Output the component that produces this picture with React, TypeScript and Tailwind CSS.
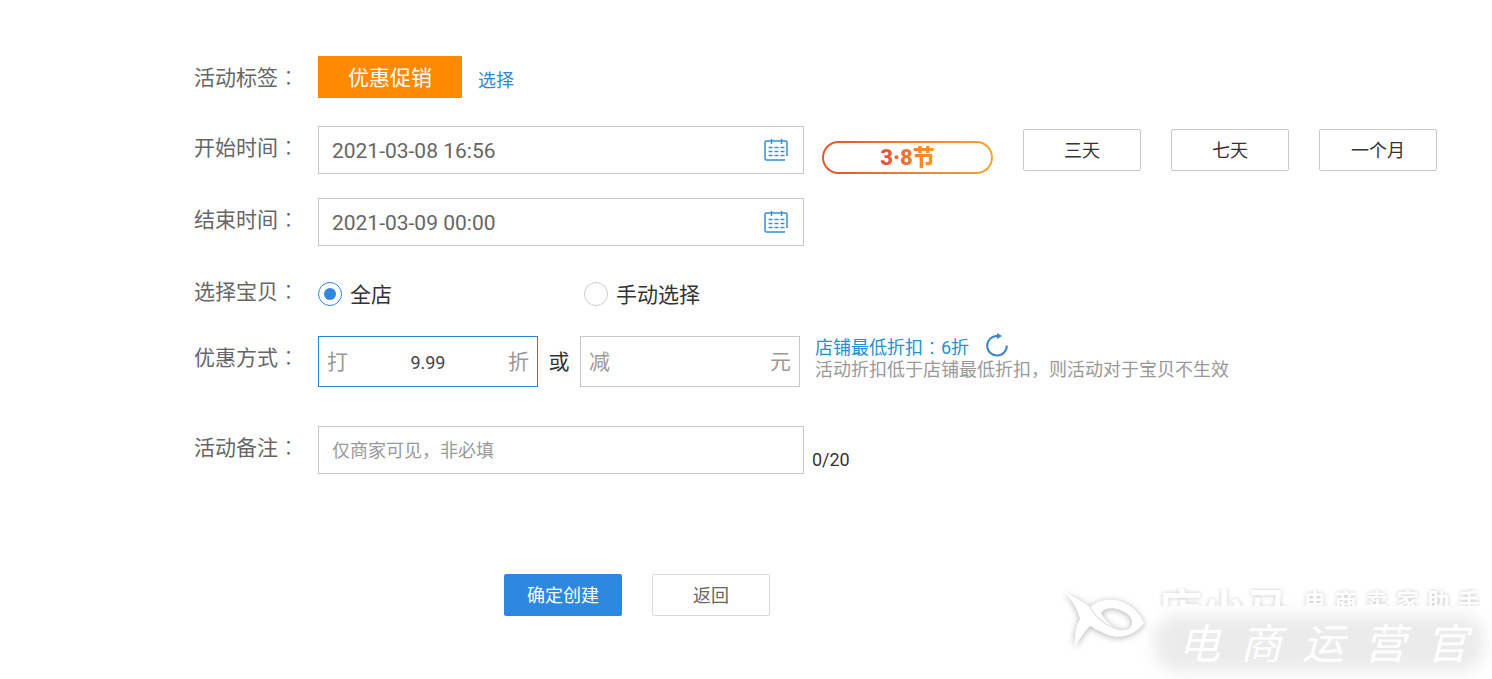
import type { ReactNode } from "react";

const ranges = ["三天", "七天", "一个月"];

function Row({ label, htmlFor, children }: { label: string; htmlFor?: string; children: ReactNode }) {
  return (
    <div className="flex items-start">
      <label htmlFor={htmlFor} className="w-[124px] shrink-0 text-[21px] leading-10 text-[#666]">
        {label}
        <span className="font-['Noto_Sans_CJK_TC',sans-serif] font-light">：</span>
      </label>
      {children}
    </div>
  );
}

function CalendarIcon() {
  return (
    <svg viewBox="0 0 24 24" className="h-6 w-6 shrink-0" fill="none" stroke="#3a8fcf" strokeWidth="1.5">
      <path d="M23 18V4.500a1.500 1.500 0 0 0-1.500-1.500h-19A1.500 1.500 0 0 0 1 4.500v16A1.500 1.500 0 0 0 2.500 22H21" />
      <path d="M7.500 1v5M17.500 1v5" />
      <path d="M4.500 9.500h4m2 0h4m2 0h4M4.500 13.500h4m2 0h4m2 0h4M4.500 17.500h4m2 0h4m2 0h4" />
    </svg>
  );
}

function DateField({ id, value }: { id: string; value: string }) {
  return (
    <div className="flex h-12 w-[486px] items-center border border-[#c8c8c8] pr-[15px] pl-[13px]">
      <input id={id} defaultValue={value} className="min-w-0 flex-1 pt-1 text-[21px] text-[#666] outline-none" />
      <CalendarIcon />
    </div>
  );
}

function Radio({ label, checked, className }: { label: string; checked?: boolean; className?: string }) {
  return (
    <label className={`flex items-center gap-2 text-[21px] text-[#333] ${className ?? ""}`}>
      <input
        type="radio"
        name="scope"
        defaultChecked={checked}
        className="grid h-6 w-6 appearance-none place-content-center rounded-full border border-[#ccc] before:h-3 before:w-3 before:rounded-full checked:border-[#2f88df] checked:before:bg-[#2f88df]"
      />
      <span className="pt-1">{label}</span>
    </label>
  );
}

function Watermark() {
  return (
    <div className="pointer-events-none absolute right-0 bottom-0 h-[95px] w-[432px] overflow-hidden select-none">
      <div className="absolute right-2 bottom-2 h-14 w-[330px] rounded-3xl bg-[#ebebeb] blur-[8px]" />
      <svg viewBox="0 0 90 66" className="absolute top-1 left-0 h-[66px] w-[90px] drop-shadow-[0_1px_3px_rgba(0,0,0,0.3)]">
        <path
          fillRule="evenodd"
          fill="#fff"
          d="M5 5C16 10 24 14 30 19C38 12 50 10 60 13C72 17 80 26 84 35C76 46 62 52 48 47C40 44 34 40 30 38C24 44 19 52 15 59C14 48 16 38 20 31C17 20 12 12 5 5ZM41 25C44 20 52 19 60 22C68 25 73 30 72 36C71 40 67 43 62 42C52 40 45 33 41 25Z"
        />
        <path d="M30 19C36 30 48 40 62 42" fill="none" stroke="#e4e4e4" strokeWidth="1.5" />
      </svg>
      <div className="absolute top-1 left-[98px] flex h-[18px] items-start overflow-hidden font-bold text-white [text-shadow:0_0_4px_rgba(0,0,0,0.22)]">
        <span className="w-[146px] text-[44px] leading-[46px]">店小马</span>
        <span className="flex w-[176px] justify-between text-[22px] leading-7">
          {["电", "商", "卖", "家", "助", "手"].map((c) => (
            <span key={c}>{c}</span>
          ))}
        </span>
      </div>
      <div className="absolute bottom-2 left-[118px] flex w-[290px] justify-between text-[42px] leading-[52px] text-white italic">
        {["电", "商", "运", "营", "官"].map((c) => (
          <span key={c}>{c}</span>
        ))}
      </div>
    </div>
  );
}

export default function App() {
  return (
    <main className="relative min-h-screen bg-white pt-14 pl-[13%] font-[Roboto,'Noto_Sans_CJK_SC',sans-serif] whitespace-nowrap text-[#333]">
      <form onSubmit={(e) => e.preventDefault()}>
        <Row label="活动标签">
          <span className="flex h-[42px] w-36 items-center justify-center bg-[#ff8a00] pt-1 text-[21px] text-white">
            优惠促销
          </span>
          <a href="#tags" className="ml-4 text-lg leading-[50px] text-[#2f88d0]">
            选择
          </a>
        </Row>

        <div className="mt-5">
          <Row label="开始时间" htmlFor="start">
            <DateField id="start" value="2021-03-08 16:56" />
            <button
              type="button"
              className="ml-[18px] h-[33px] w-[171px] shrink-0 self-end rounded-full bg-linear-to-r from-[#e5502f] to-[#f2a435] p-[2px]"
            >
              <span className="flex h-full items-center justify-center rounded-full bg-white">
                <span className="bg-linear-to-r from-[#e84a35] to-[#f59a25] bg-clip-text text-[22px] leading-7 font-black text-transparent">
                  3·8节
                </span>
              </span>
            </button>
            <div className="ml-[30px] flex gap-[30px] self-center">
              {ranges.map((r) => (
                <button
                  key={r}
                  type="button"
                  className="h-[42px] w-[118px] rounded-xs border border-[#c8c8c8] pt-0.5 text-lg"
                >
                  {r}
                </button>
              ))}
            </div>
          </Row>
        </div>

        <div className="mt-6">
          <Row label="结束时间" htmlFor="end">
            <DateField id="end" value="2021-03-09 00:00" />
          </Row>
        </div>

        <div className="mt-6">
          <Row label="选择宝贝">
            <div className="flex h-12 items-center">
              <Radio label="全店" checked className="w-[266px]" />
              <Radio label="手动选择" />
            </div>
          </Row>
        </div>

        <div className="mt-[18px]">
          <Row label="优惠方式" htmlFor="discount">
            <div className="flex h-[51px] w-[220px] items-center border border-[#2f83c8] px-2 pt-0.5 text-[21px] text-[#999]">
              打
              <input
                id="discount"
                defaultValue="9.99"
                className="min-w-0 flex-1 text-center text-lg text-[#444] outline-none"
              />
              折
            </div>
            <span className="w-[42px] pt-0.5 text-center text-[21px] leading-[49px]">或</span>
            <div className="flex h-[51px] w-[220px] items-center border border-[#c8c8c8] px-2 pt-0.5 text-[21px] text-[#999]">
              减
              <input aria-label="减" className="min-w-0 flex-1 text-center text-lg text-[#444] outline-none" />
              元
            </div>
            <div className="ml-[15px] text-lg leading-[23px] text-[#999]">
              <p className="flex h-[22px] items-center text-[#2490d0]">
                店铺最低折扣
                <span className="font-['Noto_Sans_CJK_TC',sans-serif] font-light">：</span>
                6折
                <button type="button" aria-label="刷新" className="ml-4 pb-1">
                  <svg viewBox="0 0 24 24" className="h-6 w-6" fill="none" stroke="#3b86c8" strokeWidth="2">
                    <path d="M14 3H12A9.800 9.800 0 1 0 21.800 12.500" />
                    <path d="M12 0L17 3L12 6Z" fill="#3b86c8" stroke="none" />
                  </svg>
                </button>
              </p>
              <p>活动折扣低于店铺最低折扣，则活动对于宝贝不生效</p>
            </div>
          </Row>
        </div>

        <div className="mt-[39px]">
          <Row label="活动备注" htmlFor="remark">
            <input
              id="remark"
              maxLength={20}
              placeholder="仅商家可见，非必填"
              className="h-12 w-[486px] border border-[#c8c8c8] px-[13px] text-lg outline-none placeholder:text-[#999]"
            />
            <span className="ml-2 self-end text-lg">0/20</span>
          </Row>
        </div>

        <div className="mt-[100px] flex gap-[30px] pl-[310px]">
          <button type="submit" className="h-[42px] w-[118px] rounded-xs bg-[#2f88df] pt-0.5 text-lg text-white">
            确定创建
          </button>
          <button
            type="button"
            className="h-[42px] w-[118px] rounded-xs border border-[#d8d8d8] pt-0.5 text-lg text-[#666]"
          >
            返回
          </button>
        </div>
      </form>
      <Watermark />
    </main>
  );
}
